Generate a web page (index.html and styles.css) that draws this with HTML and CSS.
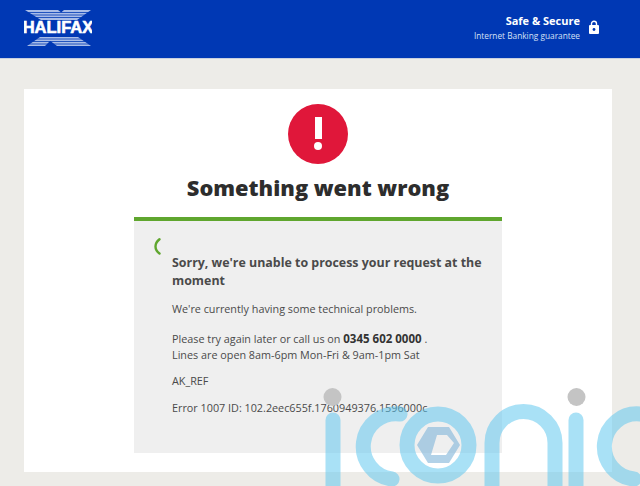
FILE: index.html
```html
<!DOCTYPE html>
<html lang="en">
<head>
  <meta charset="UTF-8">
  <meta name="viewport" content="width=device-width, initial-scale=1.0">
  <title>Something went wrong</title>
  <link rel="stylesheet" href="styles.css">
</head>
<body>
  <header class="site-header">
    <svg class="logo" width="68" height="36" viewBox="0 0 68 36">
      <g fill="#a9bde8">
        <path d="M1 0h33l13 10H17z"/>
        <path d="M67 0H40L33 6l5 4h15z"/>
        <path d="M3 36l13-9h14l-9 9z"/>
        <path d="M67 36H33l-8-6 4-3h25z"/>
      </g>
      <g stroke="#0038b4" stroke-width="0.800">
        <path d="M0 2.500h68M0 5h68M0 7.500h68M0 29h68M0 31.500h68M0 34h68"/>
      </g>
      <text class="logo-text" x="34" y="23" text-anchor="middle">HALIFAX</text>
    </svg>
    <div class="secure">
      <div class="secure-text">
        <strong>Safe &amp; Secure</strong>
        <span>Internet Banking guarantee</span>
      </div>
      <svg class="lock" width="10" height="14" viewBox="0 0 10 14">
        <path d="M2.500 6V3.800a2.500 2.500 0 0 1 5 0V6" fill="none" stroke="#fff" stroke-width="1.400"/>
        <rect x="0" y="5" width="10" height="9" rx="1" fill="#fff"/>
        <circle cx="5" cy="9.500" r="1.400" fill="#0038b4"/>
      </svg>
    </div>
  </header>

  <main class="card">
    <div class="alert-icon"><span class="alert-bar"></span><span class="alert-dot"></span></div>
    <h1>Something went wrong</h1>
    <section class="panel">
      <svg class="spinner" width="8" height="17" viewBox="0 0 8 17">
        <path d="M5.500 1.300C2.800 3.500 1.500 6 1.500 8.500s1.300 5 4 7" fill="none" stroke="#5fa62e" stroke-width="2.400" stroke-linecap="round"/>
      </svg>
      <h2>Sorry, we're unable to process your request at the moment</h2>
      <p>We're currently having some technical problems.</p>
      <p class="gap-top">Please try again later or call us on <b>0345 602 0000</b> .<br>Lines are open 8am-6pm Mon-Fri &amp; 9am-1pm Sat</p>
      <p>AK_REF</p>
      <p>Error 1007 ID: 102.2eec655f.1760949376.1596000c</p>
    </section>
  </main>

  <!-- watermark sits over the whole page -->
  <svg class="watermark" width="640" height="486" viewBox="0 0 640 486">
    <g fill="none" stroke="#5cc6ef" stroke-width="15" stroke-linecap="round" opacity="0.52">
      <path d="M333 420V486"/>
      <path d="M400 414a31 31 0 0 0-8 65"/>
      <circle cx="438" cy="445" r="31"/>
      <path d="M492 486V443a31.500 31.500 0 0 1 63 0V486"/>
      <path d="M576 420V486"/>
      <path d="M640 414a31 31 0 0 0-6 65"/>
    </g>
    <path d="M428 427h21l11 18-11 18h-21l-11-18zM431 455h15l8-12-7-8h-10z" fill="#7fb4d8" fill-rule="evenodd" opacity="0.6"/>
    <circle cx="332.500" cy="397" r="9" fill="#c4c4c4"/>
    <circle cx="576.500" cy="397" r="9" fill="#c4c4c4"/>
  </svg>
</body>
</html>
```

FILE: styles.css
```css
* {
  box-sizing: border-box;
}

html, body {
  height: 100%;
}

body {
  margin: 0;
  background: #edece8;
  font-family: "Open Sans", "Noto Sans", sans-serif;
  font-size: 10.800px;
  color: #4a4a4a;
  overflow: hidden;
}

.site-header {
  height: 59px;
  padding: 10px 41px 0 24px;
  display: flex;
  justify-content: space-between;
  align-items: flex-start;
  background: #0038b4;
  border-bottom: 1px solid #c8d0e0;
}

.logo-text {
  font-family: "Liberation Sans", sans-serif;
  font-weight: bold;
  font-size: 16.500px;
  fill: #fff;
  stroke: #fff;
  stroke-width: 0.600px;
}

.secure {
  display: flex;
  align-items: center;
  gap: 9px;
  margin-top: 3px;
  color: #fff;
}

.secure-text {
  display: flex;
  flex-direction: column;
  align-items: flex-end;
  gap: 2px;
}

.secure-text strong {
  font-size: 11px;
}

.secure-text span {
  font-size: 8.300px;
  color: #d5e0f5;
}

.card {
  margin: 30px 28px 0 24px;
  height: 383px;
  padding-top: 15px;
  display: flex;
  flex-direction: column;
  align-items: center;
  background: #fff;
}

.alert-icon {
  width: 60px;
  height: 60px;
  padding-top: 13px;
  display: flex;
  flex-direction: column;
  align-items: center;
  gap: 3px;
  border-radius: 50%;
  background: #e0173a;
}

.alert-bar {
  width: 7px;
  height: 22px;
  background: #fff;
}

.alert-dot {
  width: 8px;
  height: 8px;
  border-radius: 50%;
  background: #fff;
}

h1 {
  margin: 10px 0 15px;
  font-size: 21.800px;
  line-height: 28px;
  font-weight: 800;
  color: #2d2d2d;
}

.panel {
  width: 368px;
  height: 236px;
  padding: 20px 18px 0 38px;
  position: relative;
  background: #efefef;
  border-top: 4px solid #5fa62e;
}

.spinner {
  position: absolute;
  left: 20px;
  top: 17px;
}

h2 {
  margin: 13px 0 11px;
  font-size: 12.420px;
  line-height: 18px;
  font-weight: 700;
  color: #4a4a4a;
}

p {
  margin: 0 0 11px;
  line-height: 16px;
}

.gap-top {
  margin-top: 14px;
  margin-bottom: 10px;
}

b {
  font-size: 11.500px;
  line-height: 1;
  color: #333;
}

.watermark {
  position: absolute;
  left: 0;
  top: 0;
}
```
